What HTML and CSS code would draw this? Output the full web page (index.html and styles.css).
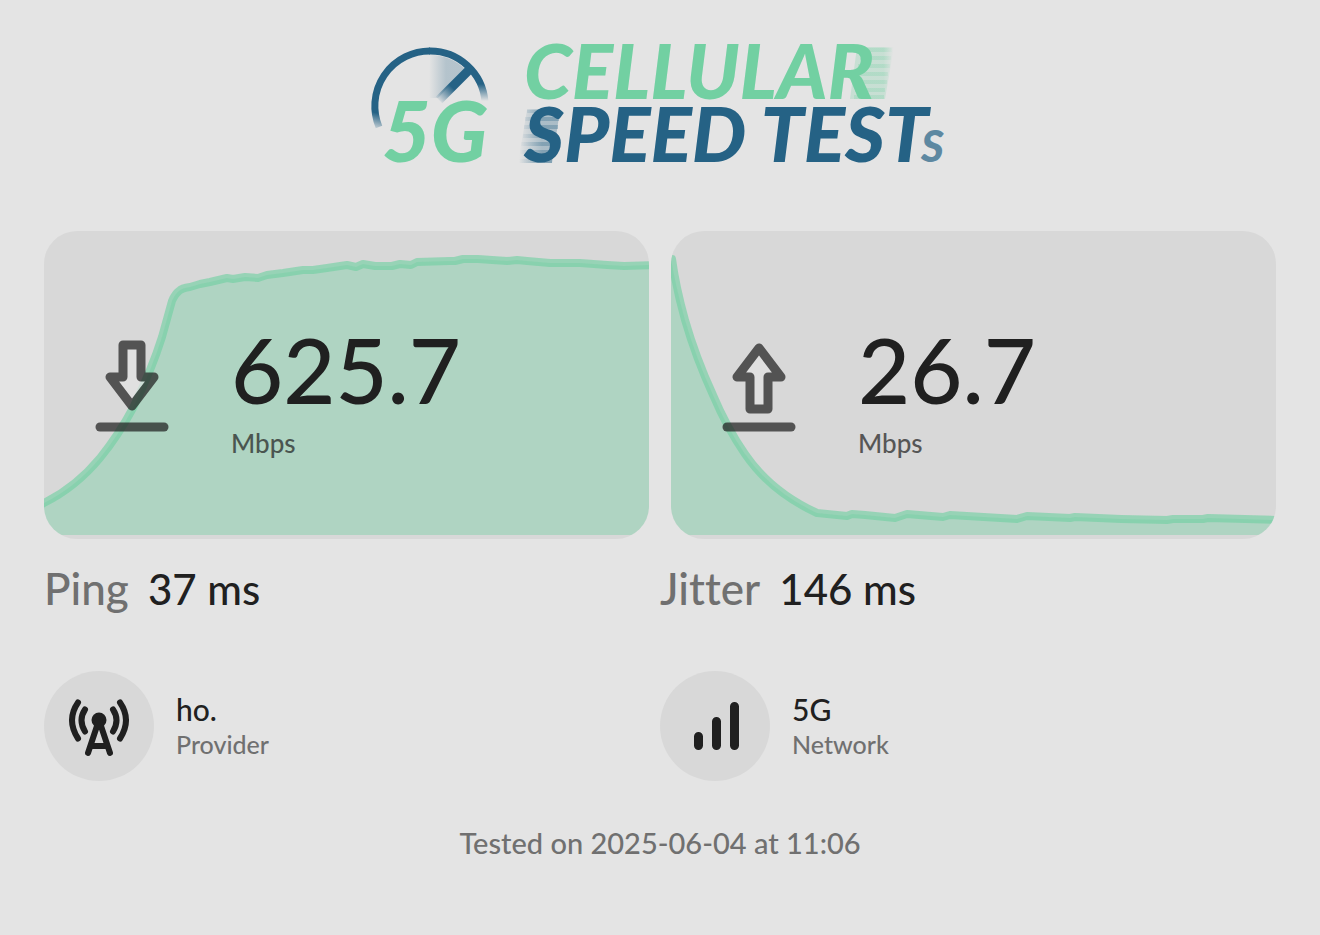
FILE: index.html
```html
<!DOCTYPE html>
<html lang="en">

<head>
    <meta charset="UTF-8">
    <meta name="viewport" content="width=device-width, initial-scale=1.0">
    <title>5G Cellular Speed Tests - Result</title>
    <link rel="stylesheet" href="styles.css">
</head>

<body>

    <!-- Logo -->
    <header class="header">
        <svg class="logo" viewBox="0 0 580 122" role="img" aria-label="5G Cellular Speed Tests">
            <defs>
                <linearGradient id="arcFade" gradientUnits="userSpaceOnUse" x1="8" y1="88" x2="12" y2="70">
                    <stop offset="0" stop-color="#256285" stop-opacity="0"/>
                    <stop offset="1" stop-color="#256285"/>
                </linearGradient>
                <linearGradient id="arcFadeRight" gradientUnits="userSpaceOnUse" x1="0" y1="57" x2="0" y2="40">
                    <stop offset="0" stop-color="#256285" stop-opacity="0"/>
                    <stop offset="1" stop-color="#256285"/>
                </linearGradient>
                <linearGradient id="needleFade" gradientUnits="userSpaceOnUse" x1="68" y1="57" x2="82" y2="43">
                    <stop offset="0" stop-color="#256285" stop-opacity="0"/>
                    <stop offset="1" stop-color="#256285"/>
                </linearGradient>
                <linearGradient id="sweep" gradientUnits="userSpaceOnUse" x1="59" y1="0" x2="76" y2="0">
                    <stop offset="0" stop-color="#256285" stop-opacity="0"/>
                    <stop offset="1" stop-color="#256285" stop-opacity="0.25"/>
                </linearGradient>
                <linearGradient id="streakRight" gradientUnits="userSpaceOnUse" x1="498" y1="0" x2="524" y2="0">
                    <stop offset="0" stop-color="#72d0a2" stop-opacity="0.25"/>
                    <stop offset="0.6" stop-color="#72d0a2" stop-opacity="0.25"/>
                    <stop offset="1" stop-color="#72d0a2" stop-opacity="0"/>
                </linearGradient>
                <linearGradient id="streakLeft" gradientUnits="userSpaceOnUse" x1="149" y1="0" x2="172" y2="0">
                    <stop offset="0" stop-color="#256285" stop-opacity="0"/>
                    <stop offset="1" stop-color="#256285" stop-opacity="0.3"/>
                </linearGradient>
            </defs>

            <!-- gauge -->
            <path d="M60 11 A51 51 0 0 1 95 25 L68 54 L58 54 Z" fill="url(#sweep)"/>
            <path d="M9 83 A55 55 0 0 1 60 7" fill="none" stroke="url(#arcFade)" stroke-width="7"/>
            <path d="M59 7 A55 55 0 0 1 115 58" fill="none" stroke="url(#arcFadeRight)" stroke-width="7"/>
            <path d="M69 56 L99 26" fill="none" stroke="url(#needleFade)" stroke-width="9"/>
            <text class="logo-green logo-5g" x="12" y="118">5G</text>

            <!-- motion streaks -->
            <path d="M487 3 H524 L515 55 H480 Z" fill="url(#streakRight)"/>
            <path d="M490 6 H522 M490 14 H521 M488 22 H520 M488 30 H518 M486 38 H517 M485 46 H515 M484 53 H514" stroke="url(#streakRight)" stroke-width="4"/>
            <path d="M157 66 H190 L182 119 H148 Z" fill="url(#streakLeft)"/>
            <path d="M157 67 H190 M155 75 H189 M154 83 H188 M153 92 H186 M151 100 H185 M150 108 H184 M149 117 H182" stroke="url(#streakLeft)" stroke-width="4"/>

            <text class="logo-green logo-word" x="154" y="55">CELLULAR</text>
            <text class="logo-blue logo-word" x="154" y="118">SPEED TEST</text>
            <text class="logo-blue logo-suffix" x="551" y="118">S</text>
        </svg>
    </header>

    <main>
        <!-- Download / upload cards -->
        <div class="cards">
            <section class="card">
                <svg class="chart" viewBox="0 0 605 308" preserveAspectRatio="none" aria-hidden="true">
                    <path class="chart-line" d="M-4 274 L0 272 Q32 256 56 227 Q74 205 89 177 Q108 138 118 106 L128 70 Q131 63 135 60 Q138 57 146 56 L156 53 L166 51 L183 47 L189 48 L201 46 L214 47 L223 44 L239 42 L259 39 L269 39 L283 37 L303 34 L312 36 L319 33 L331 35 L348 35 L356 33 L367 34 L373 31 L406 30 L411 30 L419 28 L434 28 L448 29 L463 30 L473 29 L483 30 L506 32 L536 32 L563 34 L580 35 L609 34"/>
                    <path class="chart-area" d="M0 272 Q32 256 56 227 Q74 205 89 177 Q108 138 118 106 L128 70 Q131 63 135 60 Q138 57 146 56 L156 53 L166 51 L183 47 L189 48 L201 46 L214 47 L223 44 L239 42 L259 39 L269 39 L283 37 L303 34 L312 36 L319 33 L331 35 L348 35 L356 33 L367 34 L373 31 L406 30 L411 30 L419 28 L434 28 L448 29 L463 30 L473 29 L483 30 L506 32 L536 32 L563 34 L580 35 L605 34 V304 H0 Z"/>
                </svg>
                <svg class="arrow" viewBox="0 0 74 92" aria-hidden="true">
                    <path class="arrow-head" d="M28 5 H46 V37 H59 L37 66 L15 37 H28 Z"/>
                    <path d="M5 87 H69"/>
                </svg>
                <div class="reading">
                    <div class="value">625.7</div>
                    <div class="unit">Mbps</div>
                </div>
            </section>

            <section class="card">
                <svg class="chart" viewBox="0 0 605 308" preserveAspectRatio="none" aria-hidden="true">
                    <path class="chart-line" d="M1 28 Q5 57 14 89 Q25 127 42 164 Q56 197 74 223 Q100 261 146 282 L176 285 L181 283 L194 284 L224 287 L236 283 L272 286 L279 284 L346 288 L356 285 L399 287 L404 286 L450 288 L496 289 L502 288 L532 288 L537 287 L609 289"/>
                    <path class="chart-area" d="M0 28 Q5 57 14 89 Q25 127 42 164 Q56 197 74 223 Q100 261 146 282 L176 285 L181 283 L194 284 L224 287 L236 283 L272 286 L279 284 L346 288 L356 285 L399 287 L404 286 L450 288 L496 289 L502 288 L532 288 L537 287 L605 289 V304 H0 Z"/>
                </svg>
                <svg class="arrow" viewBox="0 0 74 92" aria-hidden="true">
                    <path class="arrow-head" d="M28 69 H46 V37 H59 L37 8 L15 37 H28 Z"/>
                    <path d="M5 87 H69"/>
                </svg>
                <div class="reading">
                    <div class="value">26.7</div>
                    <div class="unit">Mbps</div>
                </div>
            </section>
        </div>

        <!-- Latency -->
        <div class="row latency">
            <div><span class="label">Ping</span> <span class="time">37 ms</span></div>
            <div><span class="label">Jitter</span> <span class="time">146 ms</span></div>
        </div>

        <!-- Connection info -->
        <div class="row">
            <div class="info">
                <div class="badge">
                    <svg class="icon" viewBox="0 0 64 64" aria-hidden="true">
                        <circle class="dot" cx="32" cy="26" r="7.500"/>
                        <path d="M11 8.500 Q-1 26 11 44.500 M53 8.500 Q65 26 53 44.500 M18 15.500 Q11 26 18 37.500 M46 15.500 Q53 26 46 37.500 M32 26 L21 59 M32 26 L43 59 M25 52 H39"/>
                    </svg>
                </div>
                <div>
                    <div class="info-value">ho.</div>
                    <div class="info-label">Provider</div>
                </div>
            </div>
            <div class="info">
                <div class="badge">
                    <svg class="icon bars" viewBox="0 0 64 64" aria-hidden="true">
                        <path d="M15.500 42.500 V51.500 M33.500 27.500 V51.500 M51.500 12.500 V51.500"/>
                    </svg>
                </div>
                <div>
                    <div class="info-value">5G</div>
                    <div class="info-label">Network</div>
                </div>
            </div>
        </div>
    </main>

    <footer class="footer">Tested on 2025-06-04 at 11:06</footer>

</body>
</html>
```
FILE: styles.css
```css
* {
    box-sizing: border-box;
}

body {
    margin: 0;
    padding: 44px;
    background-color: #e4e4e4;
    color: #202020;
    font-family: Lato, 'Liberation Sans', sans-serif;
    font-weight: 500;
    font-variant-ligatures: none;
}

/* Logo */
.header {
    text-align: center;
    margin-bottom: 65px;
}

.logo {
    display: block;
    width: 580px;
    max-width: 100%;
    margin: 0 auto;
    overflow: visible;
}

.logo text {
    font-weight: 900;
    font-style: italic;
}

.logo-green {
    fill: #72d0a2;
}

.logo-blue {
    fill: #256285;
}

.logo-5g {
    font-size: 84px;
}

.logo-word {
    font-size: 77px;
}

.logo-suffix {
    font-size: 44px;
    opacity: 0.7;
}

/* Speed cards */
.cards {
    display: grid;
    grid-template-columns: 1fr 1fr;
    gap: 22px;
}

.card {
    position: relative;
    display: flex;
    align-items: center;
    gap: 62px;
    height: 308px;
    padding-left: 51px;
    border-radius: 33px;
    background-color: #d8d8d8;
    overflow: hidden;
}

/* Chart sits behind the card content */
.chart {
    position: absolute;
    inset: 0;
    width: 100%;
    height: 100%;
}

.chart-line {
    fill: none;
    stroke: #72d0a2;
    stroke-width: 8;
    stroke-linecap: round;
    stroke-linejoin: round;
    opacity: 0.64;
}

.chart-area {
    fill: #72d0a2;
    opacity: 0.4;
}

.arrow {
    position: relative;
    width: 74px;
    height: 92px;
    margin-top: 2px;
    fill: none;
    stroke: #202020;
    stroke-width: 9;
    stroke-linecap: round;
    stroke-linejoin: round;
    opacity: 0.72;
}

.arrow-head {
    fill: #e4e4e4;
}

.reading {
    position: relative;
    padding-top: 8px;
}

.value {
    font-size: 90px;
    line-height: 100px;
}

.unit {
    margin-top: 8px;
    font-size: 26px;
    line-height: 32px;
    opacity: 0.7;
}

/* Latency and connection rows */
.row {
    display: grid;
    grid-template-columns: 1fr 1fr;
}

.latency {
    margin: 22px 0 55px;
    font-size: 44px;
    line-height: 54px;
}

.label {
    color: #707070;
    margin-right: 8px;
}

.time {
    font-size: 42px;
}

.info {
    display: flex;
    align-items: center;
    gap: 22px;
}

.badge {
    display: flex;
    align-items: center;
    justify-content: center;
    width: 110px;
    height: 110px;
    border-radius: 50%;
    background-color: #d8d8d8;
}

.icon {
    width: 64px;
    height: 64px;
    fill: none;
    stroke: #202020;
    stroke-width: 6;
    stroke-linecap: round;
    stroke-linejoin: round;
}

.dot {
    fill: #202020;
    stroke: none;
}

.bars {
    stroke-width: 9;
}

.info-value {
    font-size: 30px;
    line-height: 36px;
}

.info-label {
    font-size: 25px;
    line-height: 34px;
    color: #707070;
}

/* Footer */
.footer {
    margin-top: 43px;
    text-align: center;
    font-size: 29px;
    line-height: 38px;
    color: #707070;
}
```
